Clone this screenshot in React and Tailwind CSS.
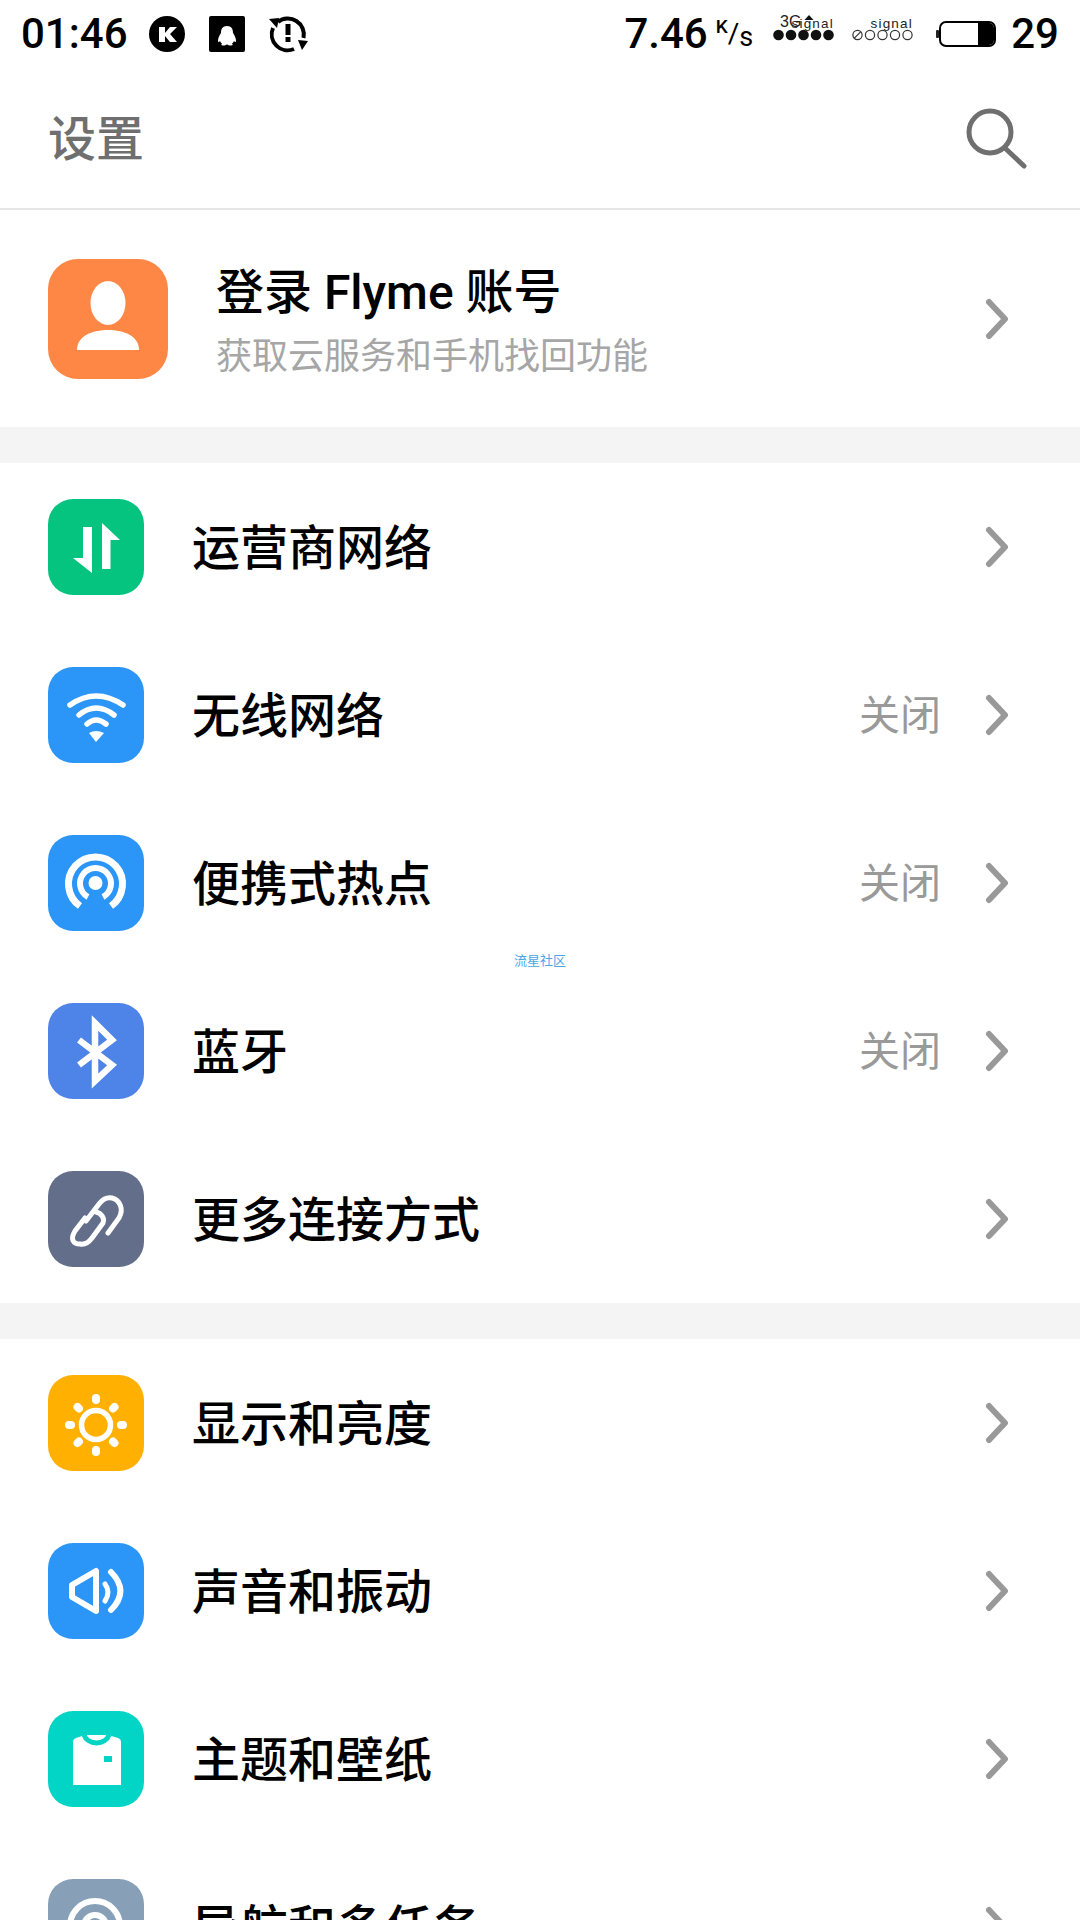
import React from "react";

const FONT = "font-['Noto_Sans_CJK_SC','Noto_Sans',sans-serif]";
const ROBOTO = "font-['Roboto','Noto_Sans_CJK_SC',sans-serif]";

// the two signal blocks in the status bar
function Dots({ filled }) {
  return (
    <svg width="62" height="40" viewBox="0 0 62 40">
      <text x="61" y="14" textAnchor="end" fontSize="13.5" fontFamily="Liberation Sans" letterSpacing="1.2" fill="#222">
        signal
      </text>
      {[0, 1, 2, 3, 4].map((i) =>
        filled ? (
          <circle key={i} cx={5.5 + i * 12.5} cy="21" r="5.3" fill="#111" />
        ) : (
          <circle key={i} cx={5.5 + i * 12.5} cy="21" r="4.6" fill="#fff" stroke="#333" strokeWidth="1.2" />
        )
      )}
      {!filled && <path d="M2.3 24.2 8.7 17.8" stroke="#333" strokeWidth="1.2" />}
      {filled && <text x="7" y="13" fontSize="16" fontFamily="Liberation Sans" fill="#222">3G</text>}
      {filled && <path d="M36 1l4.5 5h-9z" fill="#111" />}
    </svg>
  );
}

function StatusBar() {
  return (
    <div className={`h-[68px] flex items-center justify-between pl-[21px] pr-[21px] text-black ${ROBOTO}`}>
      <div className="flex items-center">
        <span className="text-[42px] leading-none font-medium">01:46</span>
        <svg className="ml-[21px]" width="36" height="36" viewBox="0 0 36 36">
          <circle cx="18" cy="18" r="18" fill="#000" />
          <path d="M10 11h6v6l5-6h7l-7 7 7 8h-7l-5-6v6h-6z" fill="#fff" />
        </svg>
        <svg className="ml-[24px]" width="36" height="36" viewBox="0 0 36 36">
          <rect width="36" height="36" rx="2" fill="#000" />
          <path d="M18 10c-4.500 0-6 3-6 7-1.500 2-3 5-3 8 0 1 .7 1.500 2 0 .5 1 1 2 2 2.500-1 1-1 2 1 2 2 0 3-.5 4-1 1 .5 2 1 4 1 2 0 2-1 1-2 1-.5 1.500-1.500 2-2.500 1.300 1.500 2 1 2 0 0-3-1.500-6-3-8 0-4-1.500-7-6-7z" fill="#fff" />
        </svg>
        <svg className="ml-[23px]" width="40" height="40" viewBox="0 0 40 40" fill="none" stroke="#000" strokeWidth="4">
          <path d="M10 8A16 16 0 0 1 35.500 24" />
          <path d="M26 35A16 16 0 0 1 5 14" />
          <path d="M1 5 11 4 9 14z" fill="#000" stroke="none" />
          <path d="M30 26 40 27 34 36z" fill="#000" stroke="none" />
          <path d="M20 10v11M20 23v5" strokeWidth="5" />
        </svg>
      </div>
      <div className="flex items-center">
        <span className="text-[42px] leading-none font-medium">7.46</span>
        <span className="ml-[8px] flex h-[34px] leading-none">
          <span className="self-start text-[19px] font-medium">K</span>
          <span className="self-center text-[28px]">/</span>
          <span className="self-end text-[27px]">s</span>
        </span>
        <div className="ml-[20px]">
          <Dots filled />
        </div>
        <div className="ml-[17px]">
          <Dots />
        </div>
        <svg className="ml-[22px]" width="60" height="28" viewBox="0 0 60 28">
          <rect x="0" y="10" width="3" height="8" rx="1" fill="#222" />
          <rect x="4" y="2" width="55" height="24" rx="6" fill="#fff" stroke="#000" strokeWidth="2" />
          <path d="M42 3h11a5 5 0 0 1 5 5v12a5 5 0 0 1-5 5H42z" fill="#000" />
        </svg>
        <span className="ml-[15px] text-[42px] leading-none font-medium">29</span>
      </div>
    </div>
  );
}

function Header() {
  return (
    <div className="h-[142px] flex items-center justify-between pl-[48px] pr-[53px] border-b-2 border-[#e6e6e6]">
      <span className={`mb-[7px] text-[48px] leading-none font-medium text-[#6f6f6f] ${FONT}`}>设置</span>
      <svg width="62" height="62" viewBox="0 0 62 62" fill="none" stroke="#6f6f6f" strokeWidth="5" strokeLinecap="round">
        <circle cx="25" cy="25" r="21" />
        <path d="M41 42 59 59" />
      </svg>
    </div>
  );
}

function Chevron() {
  return (
    <svg width="26" height="42" viewBox="0 0 26 42" fill="none" stroke="#999" strokeWidth="6" strokeLinecap="round" strokeLinejoin="round">
      <path d="M5 4 21 21 5 38" />
    </svg>
  );
}

function IconBox({ bg, children }) {
  return (
    <div className={`w-[96px] h-[96px] rounded-[25px] flex items-center justify-center shrink-0 ${bg}`}>
      <svg width="96" height="96" viewBox="0 0 96 96">
        {children}
      </svg>
    </div>
  );
}

function Row({ bg, icon, label, value }) {
  return (
    <div className="h-[168px] flex items-center pl-[48px] pr-[70px]">
      <IconBox bg={bg}>{icon}</IconBox>
      <span className={`ml-[48px] mb-[7px] flex-1 text-[48px] leading-none font-medium text-black ${FONT}`}>{label}</span>
      {value && <span className={`mr-[43px] mb-[6px] text-[41px] leading-none text-[#999] ${FONT}`}>{value}</span>}
      <Chevron />
    </div>
  );
}

const white = { fill: "none", stroke: "#fff", strokeWidth: 5.5 };

const group1 = [
  {
    bg: "bg-[#05c480]",
    label: "运营商网络",
    icon: <path d="M44 28V74L25 59H35V28zM54 24 72 41H62.500V70H54z" fill="#fff" />,
  },
  {
    bg: "bg-[#2b96f7]",
    label: "无线网络",
    value: "关闭",
    icon: (
      <g {...white} strokeLinecap="round" strokeWidth="5.5">
        <path d="M22 38Q48 20 75 38" />
        <path d="M31 48Q48 34 66 48" />
        <path d="M39 57Q48 49 58 57" />
        <path d="M41 66Q48 62 56 66L48 75z" fill="#fff" stroke="none" />
      </g>
    ),
  },
  {
    bg: "bg-[#2b96f7]",
    label: "便携式热点",
    value: "关闭",
    icon: (
      <g {...white}>
        <path d="M32 71A27 27 0 1 1 63 71" strokeWidth="7" />
        <path d="M40 62A15.500 15.500 0 1 1 55 62" strokeWidth="6" />
        <circle cx="47.500" cy="48" r="7" fill="#fff" stroke="none" />
      </g>
    ),
  },
  {
    bg: "bg-[#4e83e8]",
    label: "蓝牙",
    value: "关闭",
    icon: <path d="M31 37 64 62 47 78V20L64 37 31 62" {...white} strokeWidth="6.500" />,
  },
  {
    bg: "bg-[#626e8a]",
    label: "更多连接方式",
    icon: (
      <g {...white} strokeLinecap="round" strokeWidth="5">
        <path d="M60 62 71 47C76 38 72 29 64 27 58 26 54 29 51 33L38 50" />
        <path d="M37 47 27 60C22 68 25 73 32 73 37 74 41 71 44 67L55 52C57 47 53 42 48 41" />
      </g>
    ),
  },
];

const group2 = [
  {
    bg: "bg-[#ffb000]",
    label: "显示和亮度",
    icon: (
      <g {...white} strokeLinecap="round">
        <circle cx="48" cy="50" r="14.500" />
        <path strokeWidth="8" d="M48 23v2M48 75v2M21 50h2M73 50h2M29.500 32l1.500 1.500M66.500 32l-1.500 1.500M29.500 68l1.500-1.500M66.500 68l-1.500-1.500" />
      </g>
    ),
  },
  {
    bg: "bg-[#2b96f7]",
    label: "声音和振动",
    icon: (
      <g {...white} strokeLinejoin="round" strokeLinecap="round" strokeWidth="6">
        <path d="M48 28V68L24 54V42z" />
        <path d="M57 41Q63 49 57 58" strokeWidth="5" />
        <path d="M63 29Q82 48 63 67" />
      </g>
    ),
  },
  {
    bg: "bg-[#02d4c6]",
    label: "主题和壁纸",
    icon: (
      <g>
        <path d="M25 31Q25 28 28 27L37 24H60L70 27Q73 28 73 31V74H25z" fill="#fff" />
        <path d="M36 24A13 11 0 0 0 61 24" fill="none" stroke="#02d4c6" strokeWidth="5" />
        <rect x="56" y="45" width="8" height="6" fill="#02d4c6" />
      </g>
    ),
  },
];

function App() {
  return (
    <div className={`relative w-[1080px] h-[1920px] overflow-hidden bg-white ${FONT}`}>
      <StatusBar />
      <Header />
      {/* 账号 */}
      <div className="h-[217px] flex items-center pl-[48px] pr-[70px]">
        <div className="w-[120px] h-[120px] rounded-[30px] bg-[#ff8746] flex items-center justify-center shrink-0">
          <svg width="120" height="120" viewBox="0 0 120 120" fill="#fff">
            <ellipse cx="60" cy="44" rx="17.500" ry="22" />
            <path d="M29 91c0-14 15-20 31-20s31 6 31 20z" />
          </svg>
        </div>
        <div className="ml-[48px] pt-[2px] flex-1">
          <div className={`text-[48px] leading-none font-medium text-black ${ROBOTO}`}>登录 Flyme 账号</div>
          <div className="mt-[18px] text-[36px] leading-none text-[#a6a6a6]">获取云服务和手机找回功能</div>
        </div>
        <Chevron />
      </div>
      <div className="h-[36px] bg-[#f4f4f4]" />
      {group1.map((r) => (
        <Row key={r.label} {...r} />
      ))}
      <div className="h-[36px] bg-[#f4f4f4]" />
      {group2.map((r) => (
        <Row key={r.label} {...r} />
      ))}
      <Row
        bg="bg-[#87a0b8]"
        label="导航和多任务"
        icon={
          <g {...white}>
            <circle cx="47" cy="47" r="25" strokeWidth="6" />
            <circle cx="47" cy="47" r="11" strokeWidth="6" />
          </g>
        }
      />
      {/* 水印 */}
      <span className="absolute left-[514px] top-[952px] text-[13px] leading-[16px] text-[#4ba6e6]">流星社区</span>
    </div>
  );
}

export default App;
